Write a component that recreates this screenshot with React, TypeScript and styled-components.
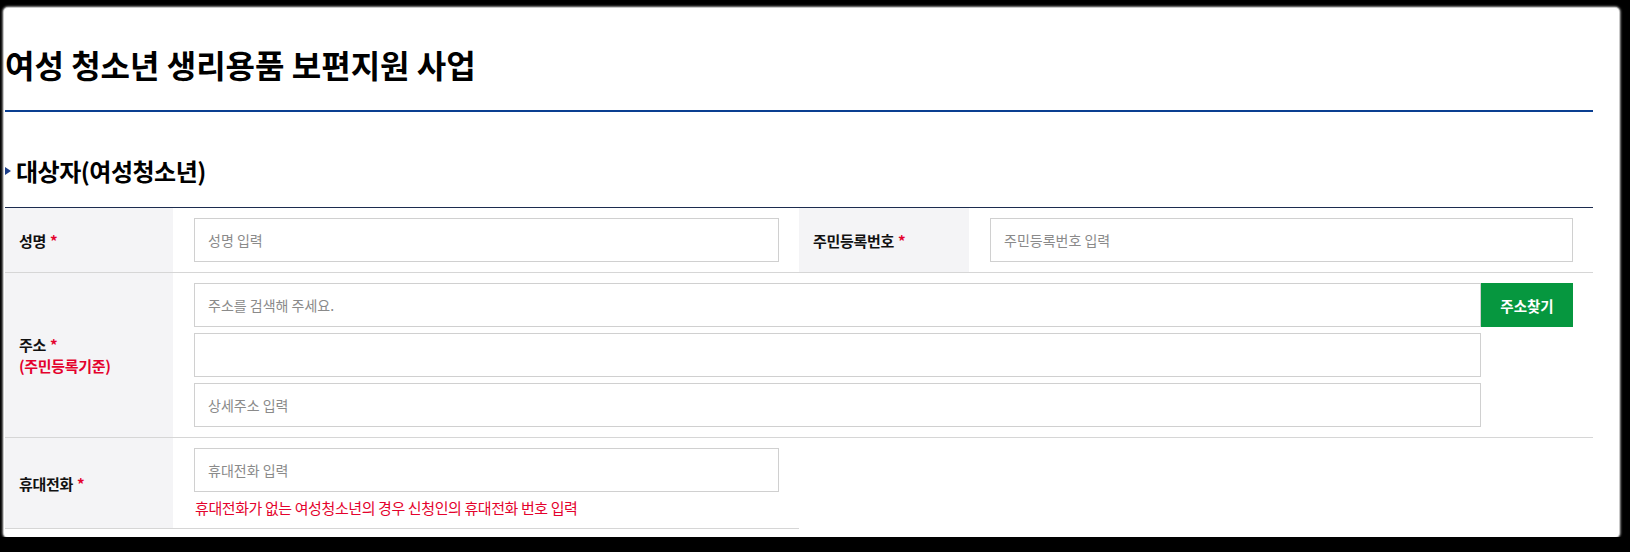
import React from "react";
import styled, { createGlobalStyle } from "styled-components";

const GlobalStyle = createGlobalStyle`
  html, body {
    margin: 0;
    padding: 0;
    background: #000;
  }
  body {
    font-family: "Noto Sans CJK KR", "Noto Sans KR", "Noto Sans", sans-serif;
    color: #111;
  }
  * { box-sizing: border-box; }
`;

const Sheet = styled.div`
  margin: 8px 11px 0 4px;
  height: 529px;
  background: #fff;
  border-radius: 4px;
  box-shadow: 0 0 0 1px #c9c9c9, 0 0 2px 2px #8a8a8a;
  padding: 0 26px 0 1px;
  overflow: hidden;
`;

const PageTitle = styled.h1`
  margin: 0;
  padding: 36px 0 26px;
  font-size: 32px;
  line-height: 40px;
  font-weight: 700;
  letter-spacing: 0;
  color: #000;
  border-bottom: 2px solid #0a3f91;
`;

const SectionTitle = styled.h2`
  margin: 44px 0 21px;
  display: flex;
  align-items: center;
  gap: 5px;
  font-size: 24px;
  line-height: 30px;
  font-weight: 700;
  letter-spacing: -0.5px;
  color: #000;

  &::before {
    content: "";
    width: 0;
    height: 0;
    border-top: 4px solid transparent;
    border-bottom: 4px solid transparent;
    border-left: 6px solid #1d3f8a;
  }
`;

const FormTable = styled.div`
  display: grid;
  grid-template-columns: 168px 626px 170px 1fr;
  border-top: 1px solid #1c2c4f;
`;

const LabelCell = styled.div`
  background: #f4f4f6;
  border-bottom: 1px solid #d6d6d6;
  padding: 0 14px;
  display: flex;
  flex-direction: column;
  justify-content: center;
  font-size: 15px;
  line-height: 21px;
  font-weight: 700;
  letter-spacing: -0.3px;
  color: #111;
`;

const Required = styled.span`
  color: #e4022d;
  margin-left: 4px;
`;

const SubNote = styled.span`
  color: #e4022d;
`;

const FieldCell = styled.div<{ $span?: number }>`
  grid-column: span ${(p) => p.$span ?? 1};
  border-bottom: 1px solid #d6d6d6;
  padding: 10px 20px 10px 21px;
  display: flex;
  flex-direction: column;
  gap: 6px;
`;

const TextInput = styled.input<{ $short?: boolean }>`
  display: block;
  width: ${(p) => (p.$short ? "calc(100% - 92px)" : "100%")};
  height: 44px;
  border: 1px solid #d0d0d0;
  background: #fff;
  padding: 0 13px;
  font-family: inherit;
  font-size: 14px;
  letter-spacing: 0;
  color: #333;
  outline: none;
  &::placeholder {
    color: #8a8a8a;
  }
`;

const InputRow = styled.div`
  display: flex;
`;

const SearchButton = styled.button`
  flex: 0 0 92px;
  height: 44px;
  border: none;
  background: #06973f;
  color: #fff;
  font-family: inherit;
  font-size: 14.5px;
  font-weight: 700;
  letter-spacing: 0;
  cursor: pointer;
`;

const HelpText = styled.p`
  margin: 0;
  font-size: 15px;
  line-height: 20px;
  letter-spacing: -0.4px;
  color: #e4022d;
  padding-left: 1px;
`;

export default function App() {
  return (
    <>
      <GlobalStyle />
      <Sheet>
        <PageTitle>여성 청소년 생리용품 보편지원 사업</PageTitle>
        <SectionTitle>대상자(여성청소년)</SectionTitle>
        <FormTable>
          <LabelCell>
            <div>
              성명<Required>*</Required>
            </div>
          </LabelCell>
          <FieldCell>
            <TextInput placeholder="성명 입력" />
          </FieldCell>
          <LabelCell>
            <div>
              주민등록번호<Required>*</Required>
            </div>
          </LabelCell>
          <FieldCell>
            <TextInput placeholder="주민등록번호 입력" />
          </FieldCell>

          <LabelCell>
            <div>
              주소<Required>*</Required>
            </div>
            <SubNote>(주민등록기준)</SubNote>
          </LabelCell>
          <FieldCell $span={3}>
            <InputRow>
              <TextInput placeholder="주소를 검색해 주세요." />
              <SearchButton type="button">주소찾기</SearchButton>
            </InputRow>
            <TextInput $short />
            <TextInput $short placeholder="상세주소 입력" />
          </FieldCell>

          <LabelCell>
            <div>
              휴대전화<Required>*</Required>
            </div>
          </LabelCell>
          <FieldCell>
            <TextInput placeholder="휴대전화 입력" />
            <HelpText>휴대전화가 없는 여성청소년의 경우 신청인의 휴대전화 번호 입력</HelpText>
          </FieldCell>
        </FormTable>
      </Sheet>
    </>
  );
}
